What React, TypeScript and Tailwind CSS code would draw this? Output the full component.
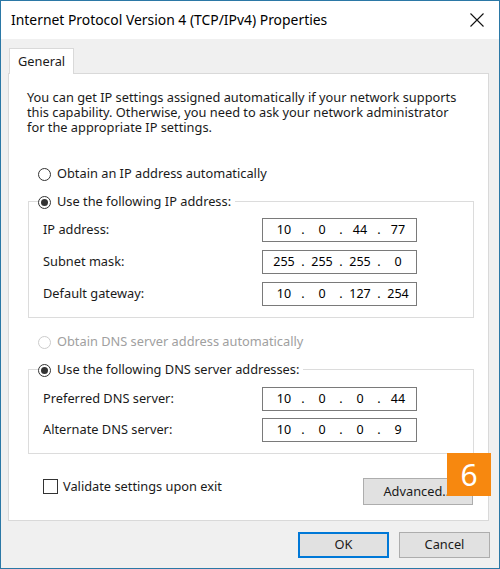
import React from "react";

const font = { fontFamily: '"Noto Sans", "Open Sans", Arial, sans-serif' };

function Radio({ checked, disabled }: { checked?: boolean; disabled?: boolean }) {
  return (
    <span
      className={`w-[13px] h-[13px] rounded-full border flex items-center justify-center bg-white shrink-0 ${
        disabled ? "border-[#cccccc]" : "border-[#333333]"
      }`}
    >
      {checked && <span className="w-[7px] h-[7px] rounded-full bg-[#333333]" />}
    </span>
  );
}

function IpField({ parts }: { parts: string[] }) {
  return (
    <div className="w-[155px] h-[24px] border border-[#7a7a7a] bg-white flex items-center pl-[6px] text-[12.5px] text-black">
      {parts.map((p, i) => (
        <React.Fragment key={i}>
          {i > 0 && <span className="w-[8px] text-center">.</span>}
          <span className="w-[30px] text-center">{p}</span>
        </React.Fragment>
      ))}
    </div>
  );
}

function Row({ label, parts }: { label: string; parts: string[] }) {
  return (
    <div className="flex items-center h-[24px]">
      <span className="w-[233px] pl-[14px]">{label}</span>
      <IpField parts={parts} />
    </div>
  );
}

export default function App() {
  return (
    <div
      className="w-[500px] h-[569px] border border-[#2b78a6] bg-[#f0f0f0] flex flex-col text-[12.8px] text-[#1a1a1a]"
      style={font}
    >
      <div className="h-[38px] bg-white flex items-center justify-between pl-[10px] pr-[13px] shrink-0">
        <span className="text-[13.9px] text-black">Internet Protocol Version 4 (TCP/IPv4) Properties</span>
        <svg width="16" height="16" viewBox="0 0 16 16" className="mr-[1px]">
          <path d="M1.5 1.5 L14.5 14.5 M14.5 1.5 L1.5 14.5" stroke="#111" strokeWidth="1.1" fill="none" />
        </svg>
      </div>

      <div className="flex flex-col pl-[7px] pt-[9px]">
        <div className="flex">
          <div className="ml-[1px] w-[65px] h-[26px] bg-white border border-b-0 border-[#d9d9d9] -mb-px relative z-10 flex items-center pl-[8px]">
            General
          </div>
        </div>
        <div className="w-[481px] h-[448px] bg-white border border-[#d9d9d9] flex flex-col relative">
          <div className="pl-[18px] pt-[16px] flex flex-col whitespace-nowrap">
            <div className="h-[15px] leading-[15px]">
              You can get IP settings assigned automatically if your network supports
            </div>
            <div className="h-[15px] leading-[15px]">
              this capability. Otherwise, you need to ask your network administrator
            </div>
            <div className="h-[15px] leading-[15px]">for the appropriate IP settings.</div>
          </div>

          <div className="flex items-center gap-[6px] ml-[29px] mt-[31px] h-[16px]">
            <Radio />
            <span>Obtain an IP address automatically</span>
          </div>

          <div className="ml-[19px] mt-[19px] w-[446px] h-[117px] border border-[#dcdcdc] flex flex-col">
            <div className="flex items-center gap-[6px] ml-[9px] -mt-[8px] h-[16px] bg-white self-start pr-[4px]">
              <Radio checked />
              <span>Use the following IP address:</span>
            </div>
            <div className="flex flex-col gap-[8px] mt-[8px]">
              <Row label="IP address:" parts={["10", "0", "44", "77"]} />
              <Row label="Subnet mask:" parts={["255", "255", "255", "0"]} />
              <Row label="Default gateway:" parts={["10", "0", "127", "254"]} />
            </div>
          </div>

          <div className="flex items-center gap-[6px] ml-[29px] mt-[16px] h-[16px] text-[#a0a0a0]">
            <Radio disabled />
            <span>Obtain DNS server address automatically</span>
          </div>

          <div className="ml-[19px] mt-[19px] w-[446px] h-[85px] border border-[#dcdcdc] flex flex-col">
            <div className="flex items-center gap-[6px] ml-[9px] -mt-[8px] h-[16px] bg-white self-start pr-[4px]">
              <Radio checked />
              <span>Use the following DNS server addresses:</span>
            </div>
            <div className="flex flex-col gap-[7px] mt-[9px]">
              <Row label="Preferred DNS server:" parts={["10", "0", "0", "44"]} />
              <Row label="Alternate DNS server:" parts={["10", "0", "0", "9"]} />
            </div>
          </div>

          <div className="flex items-start justify-between ml-[34px] mr-[15px] mt-[21px]">
            <div className="flex items-center gap-[5px] mt-[2px]">
              <span className="w-[15px] h-[15px] border border-[#333333] bg-white" />
              <span>Validate settings upon exit</span>
            </div>
            <div className="relative">
              <button className="w-[110px] h-[27px] bg-[#e1e1e1] border border-[#adadad] mt-[3px]">
                Advanced...
              </button>
              <div className="absolute -top-[22px] right-[-18px] w-[44px] h-[43px] bg-[#f7880f] text-white text-[30px] leading-none flex items-center justify-center">
                6
              </div>
            </div>
          </div>
        </div>

        <div className="flex justify-end gap-[10px] mt-[11px] pr-[9px]">
          <button className="w-[91px] h-[26px] bg-[#e1e1e1] border-2 border-[#0078d7]">OK</button>
          <button className="w-[91px] h-[26px] bg-[#e1e1e1] border border-[#adadad]">Cancel</button>
        </div>
      </div>
    </div>
  );
}
